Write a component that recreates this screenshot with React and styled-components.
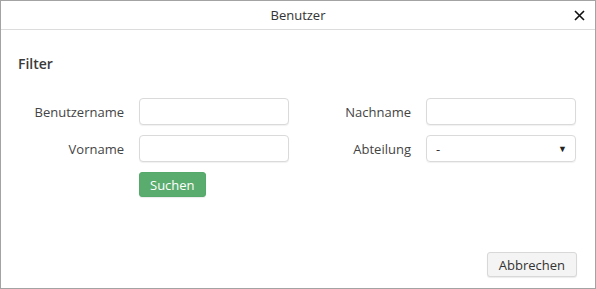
import styled, { createGlobalStyle } from 'styled-components'

const Global = createGlobalStyle`
  html, body { margin: 0; padding: 0; background: #fff; }
  body { font-family: "Open Sans", "Liberation Sans", sans-serif; color: #333; }
  * { box-sizing: border-box; }
`

const Dialog = styled.div`
  width: 596px;
  height: 289px;
  border: 1px solid #a3a3a3;
  display: flex;
  flex-direction: column;
  background: #fff;
`

const Header = styled.div`
  height: 29px;
  border-bottom: 1px solid #dcdcdc;
  display: flex;
  align-items: center;
  justify-content: center;
  position: relative;
  font-size: 13px;
  color: #333;
`

const Close = styled.button`
  position: absolute;
  right: 9px;
  top: 7px;
  width: 14px;
  height: 14px;
  padding: 0;
  border: 0;
  background: none;
  display: flex;
  align-items: center;
  justify-content: center;
`

const Body = styled.div`
  flex: 1;
  padding: 24px 17px 0;
`

const Title = styled.h3`
  margin: 0 0 25px;
  font-size: 14px;
  font-weight: 600;
  line-height: 19px;
  color: #3a3a3a;
`

const Grid = styled.div`
  display: grid;
  grid-template-columns: 106px 150px 107px 150px;
  column-gap: 15px;
  row-gap: 10px;
  align-items: center;
`

const Label = styled.label`
  text-align: right;
  font-size: 13px;
  color: #444;
`

const Input = styled.input`
  height: 27px;
  width: 150px;
  border: 1px solid #dadada;
  border-radius: 4px;
  box-shadow: 0 1px 1px rgba(0, 0, 0, 0.06);
  font: inherit;
  font-size: 13px;
  padding: 0 8px;
  outline: none;
`

const Select = styled.div`
  height: 27px;
  width: 150px;
  border: 1px solid #dadada;
  border-radius: 4px;
  box-shadow: 0 1px 1px rgba(0, 0, 0, 0.06);
  font-size: 13px;
  padding: 0 8px 0 9px;
  display: flex;
  align-items: center;
  justify-content: space-between;
  color: #333;
`

const Arrow = styled.span`
  font-size: 9px;
  color: #222;
`

const Button = styled.button`
  height: 25px;
  padding: 0 ${p => (p.$primary ? '10px' : '11px')};
  border-radius: 3px;
  font-family: inherit;
  font-size: 13px;
  border: 1px solid ${p => (p.$primary ? '#55a96a' : '#d8d8d8')};
  background: ${p => (p.$primary ? '#5aac6e' : '#f4f4f4')};
  color: ${p => (p.$primary ? '#fff' : '#333')};
  box-shadow: 0 1px 1px rgba(0, 0, 0, 0.08);
  justify-self: start;
`

const Footer = styled.div`
  display: flex;
  justify-content: flex-end;
  padding: 0 18px 11px;
`

export default function App() {
  return (
    <>
      <Global />
      <Dialog>
        <Header>
          Benutzer
          <Close aria-label="Schließen">
            <svg width="11" height="11" viewBox="0 0 11 11">
              <path d="M1 1L10 10M10 1L1 10" stroke="#111" strokeWidth="1.6" />
            </svg>
          </Close>
        </Header>
        <Body>
          <Title>Filter</Title>
          <Grid>
            <Label>Benutzername</Label>
            <Input />
            <Label>Nachname</Label>
            <Input />
            <Label>Vorname</Label>
            <Input />
            <Label>Abteilung</Label>
            <Select>
              <span>-</span>
              <Arrow>▼</Arrow>
            </Select>
            <span />
            <Button $primary>Suchen</Button>
          </Grid>
        </Body>
        <Footer>
          <Button>Abbrechen</Button>
        </Footer>
      </Dialog>
    </>
  )
}
